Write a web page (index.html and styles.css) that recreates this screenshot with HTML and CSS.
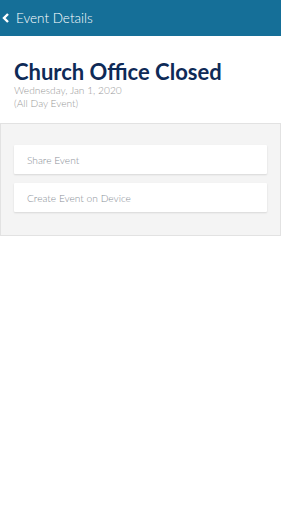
FILE: index.html
```html
<!DOCTYPE html>
<html>
<head>
<meta charset="utf-8">
<link rel="stylesheet" href="styles.css">
</head>
<body>
<header class="topbar">
  <svg class="back" width="8" height="10" viewBox="0 0 8 10"><path d="M6 1 L2 5 L6 9" fill="none" stroke="#fff" stroke-width="2.4"/></svg>
  <span class="topbar-title">Event Details</span>
</header>
<section class="info">
  <h1 class="title">Church Office Closed</h1>
  <div class="meta">Wednesday, Jan 1, 2020</div>
  <div class="meta">(All Day Event)</div>
</section>
<section class="actions">
  <div class="card">Share Event</div>
  <div class="card">Create Event on Device</div>
</section>
</body>
</html>
```
FILE: styles.css
```css
* { box-sizing: border-box; }
html, body { margin: 0; padding: 0; background: #fff; }
body { font-family: Lato, "Open Sans", sans-serif; width: 281px; }
.topbar {
  height: 36px;
  background: #156f98;
  display: flex;
  align-items: center;
  padding-left: 2px;
  gap: 6px;
}
.back { display: block; }
.topbar-title { color: #fff; font-size: 13.5px; font-weight: 300; }
.info { padding: 23px 14px 13px; }
.title {
  margin: 0;
  font-size: 22px;
  font-weight: 700;
  color: #0e2a57;
  line-height: 25px;
}
.meta { color: #999; font-size: 10.2px; font-weight: 300; line-height: 13px; }
.actions {
  background: #f4f4f4;
  border: 1px solid #e2e2e2;
  width: 281px;
  padding: 21px 13px 23px;
  display: flex;
  flex-direction: column;
  gap: 9px;
}
.card {
  background: #fff;
  height: 29px;
  display: flex;
  align-items: center;
  padding-left: 13px;
  font-size: 10.2px;
  font-weight: 300;
  color: #8a9098;
  box-shadow: 0 1px 2px rgba(0,0,0,0.12);
  border-radius: 1px;
}
```
